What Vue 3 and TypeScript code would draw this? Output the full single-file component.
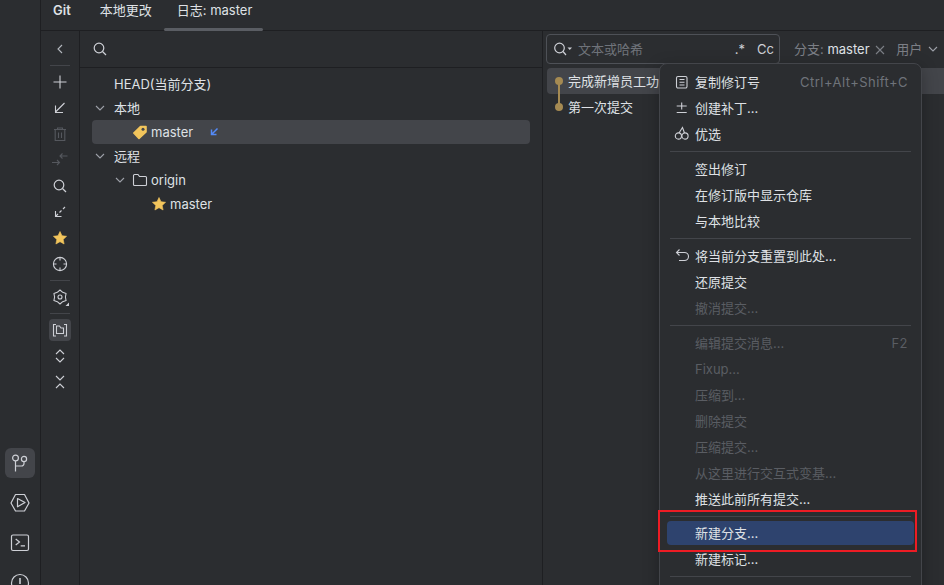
<script setup lang="ts">
type MenuRow = { label?: string; shortcut?: string; icon?: string; disabled?: boolean; active?: boolean; sep?: boolean };

const tabs = [
  { label: '本地更改', active: false },
  { label: '日志: master', active: true },
];

const menu: MenuRow[] = [
  { label: '复制修订号', shortcut: 'Ctrl+Alt+Shift+C', icon: 'copy' },
  { label: '创建补丁...', icon: 'patch' },
  { label: '优选', icon: 'cherry' },
  { sep: true },
  { label: '签出修订' },
  { label: '在修订版中显示仓库' },
  { label: '与本地比较' },
  { sep: true },
  { label: '将当前分支重置到此处...', icon: 'undo' },
  { label: '还原提交' },
  { label: '撤消提交...', disabled: true },
  { sep: true },
  { label: '编辑提交消息...', shortcut: 'F2', disabled: true },
  { label: 'Fixup...', disabled: true },
  { label: '压缩到...', disabled: true },
  { label: '删除提交', disabled: true },
  { label: '压缩提交...', disabled: true },
  { label: '从这里进行交互式变基...', disabled: true },
  { label: '推送此前所有提交...' },
  { sep: true },
  { label: '新建分支...', active: true },
  { label: '新建标记...' },
  { sep: true },
];
</script>

<template>
  <div class="app">
    <aside class="stripe">
      <div class="stripe-btn active">
        <svg width="20" height="20" viewBox="0 0 20 20" fill="none" stroke="#ced0d6" stroke-width="1.2">
          <circle cx="5.500" cy="5" r="2.900" />
          <circle cx="14" cy="6" r="2.600" />
          <path d="M5.500 7.900V18.500M14 8.600V10.500A2.500 2.500 0 0 1 11.500 13H5.500" />
        </svg>
      </div>
      <div class="stripe-btn">
        <svg width="20" height="20" viewBox="0 0 20 20" fill="none" stroke="#ced0d6" stroke-width="1.2">
          <path d="M5.500 1.500H14.500L19 10L14.500 18H5.500L1 10Z" stroke-linejoin="round" />
          <path d="M7.500 5.500L15 9.500L7.500 13.800Z" stroke-linejoin="round" />
        </svg>
      </div>
      <div class="stripe-btn">
        <svg width="20" height="20" viewBox="0 0 20 20" fill="none" stroke="#ced0d6" stroke-width="1.2">
          <rect x="1.500" y="2" width="17" height="15.500" rx="1.500" />
          <path d="M5.700 6L9.500 9L5.700 12M10.700 12.800H15" />
        </svg>
      </div>
      <div class="stripe-btn">
        <svg width="20" height="20" viewBox="0 0 20 20" fill="none" stroke="#ced0d6" stroke-width="1.2">
          <circle cx="10" cy="10" r="8.500" />
          <path d="M10 5V11" stroke-width="1.600" />
        </svg>
      </div>
    </aside>

    <main class="tool-window">
      <header class="tabs">
        <span class="title">Git</span>
        <span v-for="t in tabs" :key="t.label" class="tab" :class="{ on: t.active }">{{ t.label }}</span>
      </header>

      <div class="body">
        <nav class="toolbar">
          <div class="tool">
            <svg width="16" height="16" viewBox="0 0 16 16" fill="none" stroke="#b4b8bf" stroke-width="1.1"><path d="M10 4L6 8L10 12" /></svg>
          </div>
          <div class="tool-sep"></div>
          <div class="tool">
            <svg width="16" height="16" viewBox="0 0 16 16" fill="none" stroke="#ced0d6" stroke-width="1.100"><path d="M8 1.500V14.500M1.500 8H14.500" /></svg>
          </div>
          <div class="tool">
            <svg width="16" height="16" viewBox="0 0 16 16" fill="none" stroke="#ced0d6" stroke-width="1.100"><path d="M12.500 3L3.500 12M3.500 5.500V12.500H11" /></svg>
          </div>
          <div class="tool">
            <svg width="16" height="16" viewBox="0 0 16 16" fill="none" stroke="#55585e" stroke-width="1.100"><path d="M2 3.500H14M5.500 3.500V2H10.500V3.500M3.200 3.500V14.500H12.800V3.500M6.500 6.500V12M9.500 6.500V12" /></svg>
          </div>
          <div class="tool">
            <svg width="18" height="16" viewBox="0 0 18 16" fill="none" stroke="#55585e" stroke-width="1.100"><path d="M16.500 4H9M11.500 1.500L9 4L11.500 6.500M1 10.500H8.500M6 8L8.500 10.500L6 13" /></svg>
          </div>
          <div class="tool">
            <svg width="16" height="16" viewBox="0 0 16 16" fill="none" stroke="#ced0d6" stroke-width="1.200"><circle cx="7" cy="7" r="4.800" /><path d="M10.500 10.500L14 14" /></svg>
          </div>
          <div class="tool">
            <svg width="16" height="16" viewBox="0 0 16 16" fill="none" stroke="#ced0d6" stroke-width="1.100"><path d="M13 3L11 5M9.500 6.500L7.500 8.500M6 10L3.500 12.500M3.500 7V12.500H9.500" /></svg>
          </div>
          <div class="tool">
            <svg width="16" height="16" viewBox="0 0 16 16"><path d="M8 1.500L10 5.700L14.600 6.300L11.200 9.400L12.100 14L8 11.700L3.900 14L4.800 9.400L1.400 6.300L6 5.700Z" fill="#f2c55c" stroke="#f2c55c" stroke-width="0.600" stroke-linejoin="round" /></svg>
          </div>
          <div class="tool">
            <svg width="16" height="16" viewBox="0 0 16 16" fill="none" stroke="#ced0d6" stroke-width="1.100"><circle cx="8" cy="8" r="6.600" /><path d="M8 1.500V4.500M8 11.500V14.500M1.500 8H4.500M11.500 8H14.500" /></svg>
          </div>
          <div class="tool-sep"></div>
          <div class="tool">
            <svg width="18" height="18" viewBox="0 0 18 18" fill="none" stroke="#ced0d6" stroke-width="1.100">
              <path d="M9 2L11.700 4.320L15.060 5.500L14.400 9L15.060 12.500L11.700 13.680L9 16L6.300 13.680L2.940 12.500L3.600 9L2.940 5.500L6.300 4.320Z" stroke-linejoin="round" />
              <circle cx="9" cy="9" r="2" />
              <path d="M18 14.500V18H14.500Z" fill="#ced0d6" stroke="none" />
            </svg>
          </div>
          <div class="tool-sep"></div>
          <div class="tool pressed">
            <svg width="16" height="16" viewBox="0 0 16 16" fill="none" stroke="#ced0d6" stroke-width="1.100"><path d="M4 2.500H1.500V14H4M12 2.500H14.500V14H12M4.500 11.500V4H7.500L9 6H11.500V11.500Z" /></svg>
          </div>
          <div class="tool">
            <svg width="16" height="16" viewBox="0 0 16 16" fill="none" stroke="#ced0d6" stroke-width="1.100"><path d="M4 6L8 2L12 6M4 10L8 14L12 10" /></svg>
          </div>
          <div class="tool">
            <svg width="16" height="16" viewBox="0 0 16 16" fill="none" stroke="#ced0d6" stroke-width="1.100"><path d="M4 2L8 6L12 2M4 14L8 10L12 14" /></svg>
          </div>
        </nav>

        <section class="branches">
          <div class="search-row">
            <svg width="16" height="16" viewBox="0 0 16 16" fill="none" stroke="#ced0d6" stroke-width="1.200"><circle cx="7" cy="7" r="4.800" /><path d="M10.500 10.500L14 14" /></svg>
          </div>
          <div class="tree">
            <div class="node lvl0"><span class="chev none"></span>HEAD(当前分支)</div>
            <div class="node lvl0">
              <svg class="chev" width="16" height="16" viewBox="0 0 16 16" fill="none" stroke="#9da0a8" stroke-width="1.100"><path d="M4 6L8 10L12 6" /></svg>本地
            </div>
            <div class="node lvl1 sel">
              <svg class="ico" width="16" height="16" viewBox="0 0 16 16"><path d="M8.500 2.500H14V8L7 14.500L1.800 9Z" fill="#f2c55c" stroke="#f2c55c" stroke-width="1.600" stroke-linejoin="round" /><circle cx="11" cy="5.200" r="1.500" fill="#43454a" /></svg>
              <span>master</span>
              <svg class="incoming" width="10" height="10" viewBox="0 0 10 10" fill="none" stroke="#548af7" stroke-width="1.500"><path d="M7.500 1.500L1.500 7.500M1.500 2.500V7.500H6.500" /></svg>
            </div>
            <div class="node lvl0">
              <svg class="chev" width="16" height="16" viewBox="0 0 16 16" fill="none" stroke="#9da0a8" stroke-width="1.100"><path d="M4 6L8 10L12 6" /></svg>远程
            </div>
            <div class="node lvl1b">
              <svg class="chev" width="16" height="16" viewBox="0 0 16 16" fill="none" stroke="#9da0a8" stroke-width="1.100"><path d="M4 6L8 10L12 6" /></svg>
              <svg class="ico folder" width="16" height="16" viewBox="0 0 16 16" fill="none" stroke="#ced0d6" stroke-width="1.100"><path d="M1.500 3.500A1 1 0 0 1 2.500 2.500H6L7.500 4.500H13.500A1 1 0 0 1 14.500 5.500V12.500A1 1 0 0 1 13.500 13.500H2.500A1 1 0 0 1 1.500 12.500Z" /></svg>
              <span>origin</span>
            </div>
            <div class="node lvl2">
              <svg class="ico" width="16" height="16" viewBox="0 0 16 16"><path d="M8 1.500L10 5.700L14.600 6.300L11.200 9.400L12.100 14L8 11.700L3.900 14L4.800 9.400L1.400 6.300L6 5.700Z" fill="#f2c55c" stroke="#f2c55c" stroke-width="0.600" stroke-linejoin="round" /></svg>
              <span>master</span>
            </div>
          </div>
        </section>

        <section class="log">
          <div class="filter-row">
            <div class="field">
              <svg width="20" height="16" viewBox="0 0 20 16" fill="none" stroke="#ced0d6" stroke-width="1.200"><circle cx="6.500" cy="7" r="4.800" /><path d="M10 10.500L13 14" /><path d="M14.500 6.500H19L16.750 9Z" fill="#ced0d6" stroke="none" /></svg>
              <span class="placeholder">文本或哈希</span>
              <span class="field-opt regex">.*</span>
              <span class="field-opt">Cc</span>
            </div>
            <span class="filter"><span class="dim">分支:</span> master
              <svg class="x" width="10" height="10" viewBox="0 0 10 10" fill="none" stroke="#7c7f86" stroke-width="1.100"><path d="M1 1L9 9M9 1L1 9" /></svg>
            </span>
            <span class="filter user"><span class="dim">用户</span>
              <svg width="12" height="12" viewBox="0 0 12 12" fill="none" stroke="#9da0a8" stroke-width="1.100"><path d="M2 4L6 8L10 4" /></svg>
            </span>
          </div>
          <div class="commits">
            <div class="graph-line"></div>
            <div class="commit sel"><span class="dot"></span>完成新增员工功能</div>
            <div class="commit"><span class="dot"></span>第一次提交</div>
          </div>
        </section>
      </div>
    </main>

    <div class="menu">
      <template v-for="(r, i) in menu" :key="i">
        <div v-if="r.sep" class="sep"></div>
        <div v-else class="item" :class="{ disabled: r.disabled, active: r.active }">
          <span class="item-ico">
            <svg v-if="r.icon === 'copy'" width="16" height="16" viewBox="0 0 16 16" fill="none" stroke="#ced0d6" stroke-width="1.100"><path d="M4 2.500H11.500A1.500 1.500 0 0 1 13 4V12.500A1.500 1.500 0 0 1 11.500 14H4A1.500 1.500 0 0 1 2.500 12.500V4A1.500 1.500 0 0 1 4 2.500ZM5.500 5.500H10.500M5.500 8.200H10.500M5.500 11H10.500" /></svg>
            <svg v-else-if="r.icon === 'patch'" width="16" height="16" viewBox="0 0 16 16" fill="none" stroke="#ced0d6" stroke-width="1.100"><path d="M7.700 2.500V9.500M2.700 6H12.700M2.700 12.500H12.700" /></svg>
            <svg v-else-if="r.icon === 'cherry'" width="16" height="16" viewBox="0 0 16 16" fill="none" stroke="#ced0d6" stroke-width="1.100"><circle cx="4.400" cy="10" r="3.100" /><circle cx="11" cy="10" r="3.100" /><path d="M5 7L8.500 1.500L10.500 7" /></svg>
            <svg v-else-if="r.icon === 'undo'" width="16" height="16" viewBox="0 0 16 16" fill="none" stroke="#ced0d6" stroke-width="1.100"><path d="M5.500 1.500L2.500 4.500L5.500 7.500M2.500 4.500H10.500A4 4 0 0 1 10.500 12.500H5" /></svg>
          </span>
          <span class="item-label">{{ r.label }}</span>
          <span v-if="r.shortcut" class="shortcut">{{ r.shortcut }}</span>
        </div>
      </template>
    </div>

    <div class="callout"></div>
  </div>
</template>

<style>
html, body { margin: 0; background: #2b2d30; overflow: hidden; }
</style>

<style scoped>
.app {
  position: relative;
  display: flex;
  width: 944px;
  height: 585px;
  overflow: hidden;
  background: #2b2d30;
  color: #dfe1e5;
  font: 13px/16px Inter, "Noto Sans CJK SC", sans-serif;
}
.stripe {
  box-sizing: border-box;
  flex: 0 0 41px;
  display: flex;
  flex-direction: column;
  justify-content: flex-end;
  gap: 10px;
  padding: 0 5px;
  margin-bottom: -13px;
  border-right: 1px solid #1e1f22;
}
.stripe-btn {
  flex: 0 0 30px;
  display: flex;
  align-items: center;
  justify-content: center;
  border-radius: 6px;
}
.stripe-btn.active { background: #43454a; }
.tool-window { flex: 1; display: flex; flex-direction: column; min-width: 0; }
.tabs {
  box-sizing: border-box;
  flex: 0 0 31px;
  display: flex;
  align-items: flex-start;
  padding: 2px 0 0 12px;
  border-bottom: 1px solid #1e1f22;
  white-space: nowrap;
}
.title { font-weight: 600; margin-right: 29px; line-height: 16px; }
.tab { padding: 0 12px 0 0; line-height: 16px; position: relative; height: 28px; }
.tab.on { box-sizing: border-box; width: 99px; padding: 0 0 0 13px; }
.tab.on::after {
  content: "";
  position: absolute;
  left: 0;
  right: 0;
  bottom: -1px;
  height: 3px;
  background: #5a5d63;
  border-radius: 2px;
}
.body { flex: 1; display: flex; min-height: 0; }
.toolbar {
  box-sizing: border-box;
  flex: 0 0 39px;
  display: flex;
  flex-direction: column;
  align-items: center;
  padding-top: 7px;
  border-right: 1px solid #1e1f22;
}
.tool {
  flex: 0 0 22px;
  width: 22px;
  margin-bottom: 4px;
  display: flex;
  align-items: center;
  justify-content: center;
  border-radius: 4px;
}
.tool.pressed { background: #43454a; }
.tool-sep { flex: 0 0 1px; width: 20px; background: #43454a; margin: 1px 0 5px; }
.branches {
  box-sizing: border-box;
  flex: 0 0 463px;
  border-right: 1px solid #1e1f22;
}
.search-row {
  box-sizing: border-box;
  height: 37px;
  display: flex;
  align-items: center;
  padding-left: 12px;
  border-bottom: 1px solid #1e1f22;
}
.tree { padding: 4px 12px 0; }
.node {
  box-sizing: border-box;
  height: 24px;
  display: flex;
  align-items: center;
  white-space: nowrap;
  border-radius: 4px;
}
.lvl1 { padding-left: 40px; }
.lvl1b { padding-left: 20px; }
.lvl2 { padding-left: 59px; }
.chev { flex: none; margin-right: 6px; }
.chev.none { width: 16px; height: 16px; display: block; }
.ico { flex: none; margin-right: 3px; }
.ico.folder { margin-left: -2px; }
.sel { background: #43454a; }
.incoming { margin-left: 17px; }
.log { flex: 1; min-width: 0; }
.filter-row {
  box-sizing: border-box;
  display: flex;
  align-items: flex-start;
  height: 37px;
  padding: 3px 0 0 3px;
  white-space: nowrap;
}
.field {
  box-sizing: border-box;
  flex: 0 0 234px;
  height: 30px;
  display: flex;
  align-items: center;
  padding: 0 5px 0 6px;
  border: 1px solid #4e5157;
  border-radius: 4px;
}
.placeholder { color: #6f737a; margin-left: 5px; flex: 1; }
.field-opt { color: #ced0d6; }
.regex { margin-right: 12px; }
.filter { margin-left: 14px; color: #dfe1e5; line-height: 30px; }
.filter.user { margin-left: 0; display: inline-flex; align-items: center; gap: 5px; }
.dim { color: #7c7f86; }
.x { margin: 0 11px 0 2px; vertical-align: -1px; }
.commits { position: relative; padding: 0 0 0 4px; }
.commit {
  position: relative;
  box-sizing: border-box;
  height: 26px;
  display: flex;
  align-items: center;
  padding-left: 21px;
  border-radius: 4px 0 0 4px;
  white-space: nowrap;
  overflow: hidden;
}
.commit.sel { background: #43454a; }
.dot {
  position: absolute;
  left: 8px;
  top: 50%;
  width: 8px;
  height: 8px;
  margin-top: -4px;
  border-radius: 50%;
  background: #a58a52;
}
.graph-line {
  position: absolute;
  left: 15px;
  top: 13px;
  width: 2px;
  height: 26px;
  background: #a58a52;
  z-index: 1;
}
.menu {
  position: absolute;
  left: 659px;
  top: 63px;
  box-sizing: border-box;
  width: 263px;
  height: 540px;
  padding: 5px 7px 0;
  background: #2b2d30;
  border: 1px solid #43454a;
  border-radius: 8px;
  box-shadow: 0 4px 16px rgba(0, 0, 0, 0.28);
  z-index: 3;
}
.item {
  box-sizing: border-box;
  height: 26px;
  display: flex;
  align-items: center;
  padding: 0 6px 0 28px;
  position: relative;
  white-space: nowrap;
}
.item.disabled { color: #5a5d63; }
.item.active { background: #2e436e; border-radius: 4px; height: 24px; margin: 1px 0; }
.item-ico { position: absolute; left: 7px; top: 5px; width: 16px; height: 16px; display: block; line-height: 0; }
.item-label { flex: 1; }
.shortcut { color: #6f737a; letter-spacing: 0.45px; }
.item.disabled .shortcut { color: #5a5d63; }
.sep { height: 1px; background: #43454a; margin: 4px 3px; }
.callout {
  position: absolute;
  left: 658px;
  top: 510px;
  width: 255px;
  height: 38px;
  border: 2px solid #ed1c24;
  z-index: 4;
  pointer-events: none;
}
</style>
